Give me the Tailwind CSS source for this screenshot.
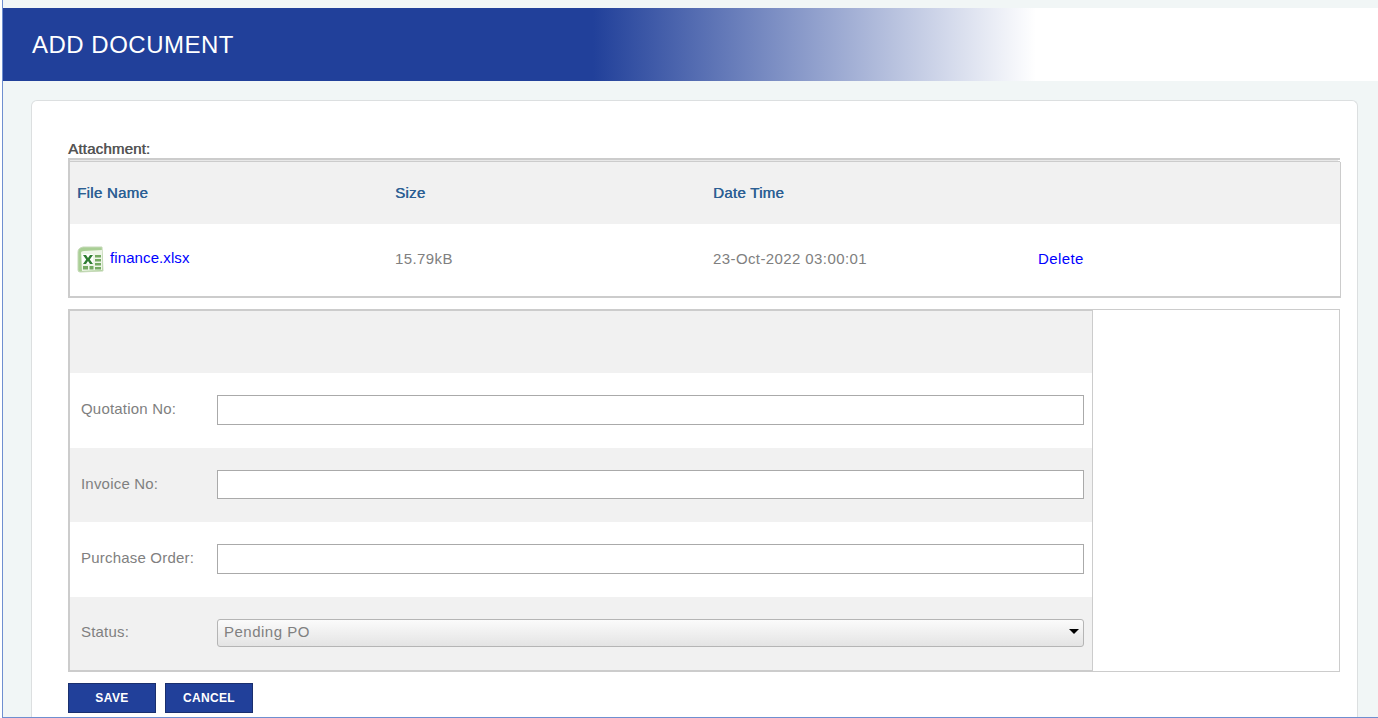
<!DOCTYPE html>
<html lang="en">
<head>
  <meta charset="UTF-8">
  <meta name="viewport" content="width=device-width, initial-scale=1.0">
  <title>Add Document</title>
  <script src="https://cdn.jsdelivr.net/npm/@tailwindcss/browser@4"></script>
</head>
<body class="bg-white font-['Liberation_Sans',Arial,sans-serif] overflow-hidden">
  <div class="ml-[2px] h-[718px] border-l border-b border-[#6f8fd0] bg-[#f1f6f6] overflow-hidden flex flex-col pt-2">

    <!-- Header -->
    <div class="h-[73px] shrink-0 flex items-center pl-[29px] bg-[linear-gradient(to_right,#21409a_0,#21409a_590px,#ffffff_1033px)]">
      <h1 class="text-[24px] tracking-[0.5px] text-white">ADD DOCUMENT</h1>
    </div>

    <!-- Card -->
    <div class="mt-[19px] ml-[28px] mr-[20px] flex-1 bg-white border border-b-0 border-[#dcdfe0] rounded-t-[6px] pt-[38px] pl-[36px] pr-[17px]">
      <p class="h-[19px] text-[15px] tracking-[0.2px] leading-[19px] text-[#555] [text-shadow:0.5px_0_0_#555]">Attachment:</p>

      <!-- Attachment table -->
      <div class="h-[2px] bg-[#cccccc]"></div>
      <div class="h-px mr-[2px] bg-[#e8e8e8] border-l-2 border-[#cccccc]"></div>
      <div class="h-px bg-[#cccccc]"></div>
      <div class="-mr-px border-2 border-r border-t-0 border-[#cccccc] bg-white">
        <div class="h-[62px] bg-[#f1f1f1] grid grid-cols-[318px_318px_1fr] items-center pl-[7px] text-[15px] tracking-[0.3px] text-[#2c5f94] [text-shadow:0.4px_0_0_#2c5f94]">
          <span>File Name</span>
          <span>Size</span>
          <span>Date Time</span>
        </div>
        <div class="h-[72px] grid grid-cols-[318px_318px_325px_1fr] items-center pl-[7px] text-[15px] tracking-[0.4px] text-[#808080]">
          <a class="flex items-center gap-[6px] text-[#0000ff] tracking-[0.1px]">
            <svg width="27" height="27" viewBox="0 0 27 27" class="shrink-0 -mt-[2px]">
              <path d="M1 6 Q1 2 6 1 L25 1 L26 25 L3 26 Q1 26 1 24 Z" fill="#a9cf95" stroke="#c5d9b8" stroke-width="1"/>
              <path d="M4 7 Q4 5 7 5 L25 4 L25 24 L5 25 Z" fill="#eef5e8"/>
              <path d="M5 8 H16 V18 H5 Z" fill="#ffffff"/>
              <path d="M6 9 L9 9 L11 12 L13 9 L16 9 L12.8 13.5 L16 18 L13 18 L11 15 L9 18 L6 18 L9.2 13.5 Z" fill="#2f7d32"/>
              <path d="M18 9 H24 V11.5 H18 Z M18 13 H24 V15.5 H18 Z M18 17 H24 V19.5 H18 Z M6 20 H11 V23.5 H6 Z M12.5 20 H16.5 V23.5 H12.5 Z M18 21 H24 V23.5 H18 Z" fill="#74aa62"/>
            </svg>
            <span class="-mt-[3px]">finance.xlsx</span>
          </a>
          <span class="-mt-px">15.79kB</span>
          <span class="-mt-px">23-Oct-2022 03:00:01</span>
          <a class="-mt-px text-[#0000ff]">Delete</a>
        </div>
      </div>

      <!-- Form table -->
      <div class="mt-[11px] h-[363px] border border-[#cccccc] flex">
        <div class="w-[1025px] -mt-px -ml-px border-2 border-r border-[#cccccc] h-[363px] text-[15px] tracking-[0.2px] text-[#808080]">
          <div class="h-[62px] bg-[#f1f1f1]"></div>
          <div class="h-[75px] flex items-center pl-[11px] pr-[8px] bg-white">
            <label class="w-[136px] -mt-[2px]">Quotation No:</label>
            <input type="text" class="flex-1 h-[30px] -mt-px bg-white border border-[#aaaaaa]">
          </div>
          <div class="h-[74px] flex items-center pl-[11px] pr-[8px] bg-[#f1f1f1]">
            <label class="w-[136px] -mt-[2px]">Invoice No:</label>
            <input type="text" class="flex-1 h-[29px] -mt-px bg-white border border-[#aaaaaa]">
          </div>
          <div class="h-[75px] flex items-center pl-[11px] pr-[8px] bg-white">
            <label class="w-[136px] -mt-[2px]">Purchase Order:</label>
            <input type="text" class="flex-1 h-[30px] -mt-px bg-white border border-[#aaaaaa]">
          </div>
          <div class="h-[73px] flex items-center pl-[11px] pr-[8px] bg-[#f1f1f1]">
            <label class="w-[136px] -mt-[2px]">Status:</label>
            <div class="relative flex-1 h-[28px] -mt-[2px] flex items-center pl-[6px] rounded-[3px] border border-[#b5b5b5] bg-[linear-gradient(to_bottom,#fbfbfb,#e4e4e4)] tracking-[0.5px]">
              <span class="-mt-px">Pending PO</span>
              <span class="absolute right-[4px] top-[9px] w-0 h-0 border-x-[5px] border-t-[5px] border-x-transparent border-t-black"></span>
            </div>
          </div>
        </div>
      </div>

      <!-- Buttons -->
      <div class="mt-[11px] flex gap-[9px]">
        <button class="w-[88px] h-[30px] bg-[#21409a] border border-[#1a2f6e] text-white text-[12px] tracking-[0.4px] font-bold">SAVE</button>
        <button class="w-[88px] h-[30px] bg-[#21409a] border border-[#1a2f6e] text-white text-[12px] tracking-[0.3px] font-bold">CANCEL</button>
      </div>
    </div>
  </div>
</body>
</html>
